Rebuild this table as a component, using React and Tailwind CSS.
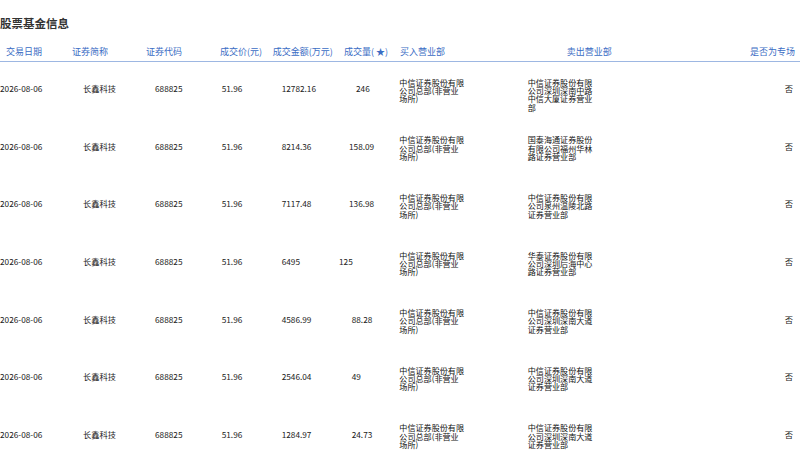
import React from 'react';

const BUY = '中信证券股份有限公司总部(非营业场所)';

const rows = [
  { amount: '12782.16', vol: '246', volPad: 'pl-[20px]', sell: '中信证券股份有限公司深圳深南中路中信大厦证券营业部' },
  { amount: '8214.36', vol: '158.09', volPad: 'pl-[13px]', sell: '国泰海通证券股份有限公司福州华林路证券营业部' },
  { amount: '7117.48', vol: '136.98', volPad: 'pl-[13px]', sell: '中信证券股份有限公司泉州温陵北路证券营业部' },
  { amount: '6495', vol: '125', volPad: 'pl-[3px]', sell: '华泰证券股份有限公司深圳后海中心路证券营业部' },
  { amount: '4586.99', vol: '88.28', volPad: 'pl-[15.7px]', sell: '中信证券股份有限公司深圳深南大道证券营业部' },
  { amount: '2546.04', vol: '49', volPad: 'pl-[15.7px]', sell: '中信证券股份有限公司深圳深南大道证券营业部' },
  { amount: '1284.97', vol: '24.73', volPad: 'pl-[15.7px]', sell: '中信证券股份有限公司深圳深南大道证券营业部' },
];

const Broker = ({ text }) => (
  <div className="w-[66px] text-[8.1px] leading-[8.3px] text-[#111] break-all pt-[0.5px]">{text}</div>
);

export default function App() {
  return (
    <div className="w-[800px] h-[450px] overflow-hidden bg-white text-[#222]" style={{ fontFamily: '"Noto Sans CJK SC", "Noto Sans", sans-serif' }}>
      <div className="pt-[15.5px] text-[11.5px] leading-[14px] font-bold text-[#333]">股票基金信息</div>

      {/* header */}
      <div className="flex pt-[16.5px] pb-[4px] text-[9px] leading-[11px] text-[#3a6cc4] border-b-[1.5px] border-[#9db7e2]">
        <div className="w-[70px] pl-[6px]">交易日期</div>
        <div className="w-[70px] pl-[2px]">证券简称</div>
        <div className="w-[70px] pl-[6px]">证券代码</div>
        <div className="w-[60px] pl-[10px]">成交价(元)</div>
        <div className="w-[66px] pl-[2.7px]">成交金额(万元)</div>
        <div className="w-[60px] pl-[8px]">成交量( ★)</div>
        <div className="w-[126px] pl-[4px]">买入营业部</div>
        <div className="w-[178px] pl-[44.7px]">卖出营业部</div>
        <div className="flex-1 text-right pr-[5px]">是否为专场</div>
      </div>

      {rows.map((r, i) => (
        <div key={i} className="flex h-[57.6px] pt-[16.3px] text-[8.25px] leading-[20px]">
          <div className="w-[70px]">2026-08-06</div>
          <div className="w-[70px] pl-[13px]">长鑫科技</div>
          <div className="w-[70px] pl-[15px]">688825</div>
          <div className="w-[60px] pl-[11.7px]">51.96</div>
          <div className="w-[66px] pl-[11.7px]">{r.amount}</div>
          <div className={`w-[60px] ${r.volPad}`}>{r.vol}</div>
          <div className="w-[126px] pl-[3.3px]"><Broker text={BUY} /></div>
          <div className="w-[178px] pl-[5.7px]"><Broker text={r.sell} /></div>
          <div className="flex-1 text-right pr-[7px]">否</div>
        </div>
      ))}
    </div>
  );
}
